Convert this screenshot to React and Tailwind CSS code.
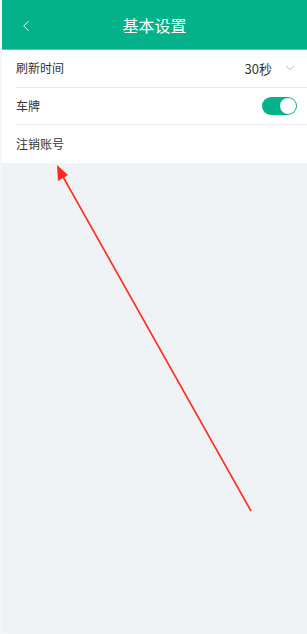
import { ChevronDown, ChevronLeft } from 'lucide-react'

const font = { fontFamily: '"Noto Sans CJK SC", "Noto Sans", sans-serif' }

function Row({ label, children, last }) {
  return (
    <div className="pl-[14px] bg-white">
      <div className={`h-[37.5px] flex items-center justify-between pr-[10px] ${last ? '' : 'border-b border-[#e8e8e8]'}`}>
        <span className="text-[12px] text-[#333]">{label}</span>
        {children}
      </div>
    </div>
  )
}

export default function App() {
  return (
    <div className="w-[307px] h-[634px] bg-[#f5f6f7] pl-[2px] pb-[1px] relative overflow-hidden" style={font}>
      <div className="h-full flex flex-col bg-[#eef2f5]">
        <div className="h-[50px] bg-[#03b28a] flex items-center relative border-b border-[#5cc9aa]">
          <ChevronLeft size={18} strokeWidth={1.3} className="text-white absolute left-[15px] top-[17px]" />
          <span className="flex-1 text-center text-white text-[16px]">基本设置</span>
        </div>
        <Row label="刷新时间">
          <div className="flex items-center gap-[11px]">
            <span className="text-[13px] text-[#333]">30秒</span>
            <ChevronDown size={14} strokeWidth={1.2} className="text-[#999]" />
          </div>
        </Row>
        <Row label="车牌">
          <div className="w-[35px] h-[18px] rounded-full bg-[#03b28a] flex items-center justify-end pr-[1px]">
            <div className="w-[16px] h-[16px] rounded-full bg-white" />
          </div>
        </Row>
        <Row label="注销账号" last />
      </div>
      <svg className="absolute left-0 top-0 pointer-events-none" width="307" height="634">
        <line x1="251" y1="511" x2="62" y2="175" stroke="#ff2a1a" strokeWidth="1.6" />
        <polygon points="57,165 68,175 58,181" fill="#ff2a1a" />
      </svg>
    </div>
  )
}
